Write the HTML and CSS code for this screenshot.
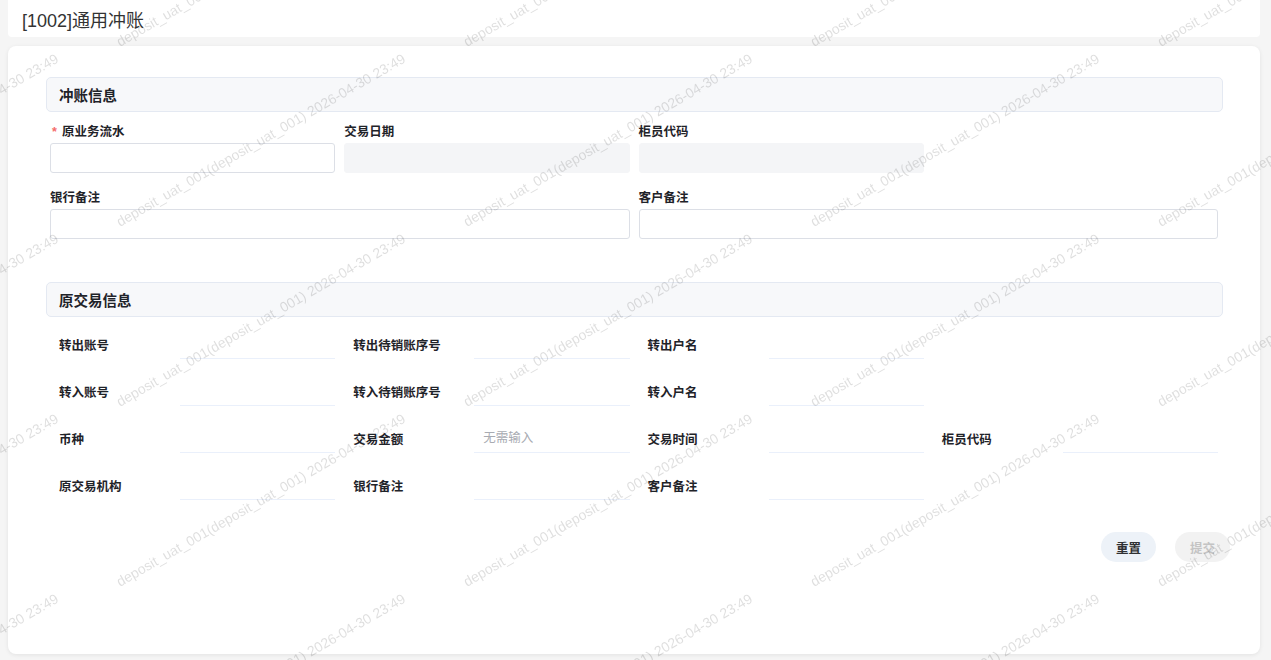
FILE: index.html
```html
<!DOCTYPE html>
<html lang="zh-CN">
<head>
    <meta charset="UTF-8">
    <meta name="viewport" content="width=device-width, initial-scale=1.0">
    <title>[1002]通用冲账</title>
    <link rel="stylesheet" href="styles.css">
</head>
<body>
    <div class="page">
        <div class="page-header">
            <h1 class="page-title">[1002]通用冲账</h1>
        </div>

        <div class="card">
            <div class="section">
                <div class="section-title">冲账信息</div>
                <div class="form-grid">
                    <div class="field">
                        <label class="field-label"><span class="required">*</span>原业务流水</label>
                        <input class="text-input" type="text">
                    </div>
                    <div class="field">
                        <label class="field-label">交易日期</label>
                        <input class="text-input" type="text" disabled>
                    </div>
                    <div class="field">
                        <label class="field-label">柜员代码</label>
                        <input class="text-input" type="text" disabled>
                    </div>
                    <div class="field span-2 col-1">
                        <label class="field-label">银行备注</label>
                        <input class="text-input" type="text">
                    </div>
                    <div class="field span-2">
                        <label class="field-label">客户备注</label>
                        <input class="text-input" type="text">
                    </div>
                </div>
            </div>

            <div class="section section-orig">
                <div class="section-title">原交易信息</div>
                <div class="info-grid">
                    <div class="info-item"><span class="info-label">转出账号</span><input class="line-input" type="text"></div>
                    <div class="info-item"><span class="info-label">转出待销账序号</span><input class="line-input" type="text"></div>
                    <div class="info-item"><span class="info-label">转出户名</span><input class="line-input" type="text"></div>

                    <div class="info-item col-1"><span class="info-label">转入账号</span><input class="line-input" type="text"></div>
                    <div class="info-item"><span class="info-label">转入待销账序号</span><input class="line-input" type="text"></div>
                    <div class="info-item"><span class="info-label">转入户名</span><input class="line-input" type="text"></div>

                    <div class="info-item col-1"><span class="info-label">币种</span><input class="line-input" type="text"></div>
                    <div class="info-item"><span class="info-label">交易金额</span><input class="line-input" type="text" placeholder="无需输入"></div>
                    <div class="info-item"><span class="info-label">交易时间</span><input class="line-input" type="text"></div>
                    <div class="info-item"><span class="info-label">柜员代码</span><input class="line-input" type="text"></div>

                    <div class="info-item col-1"><span class="info-label">原交易机构</span><input class="line-input" type="text"></div>
                    <div class="info-item"><span class="info-label">银行备注</span><input class="line-input" type="text"></div>
                    <div class="info-item"><span class="info-label">客户备注</span><input class="line-input" type="text"></div>
                </div>
            </div>

            <div class="actions">
                <button class="btn btn-reset">重置</button>
                <button class="btn btn-submit" disabled>提交</button>
            </div>
        </div>
    </div>

    <div class="watermark">
        <div class="watermark-grid">
            <span>deposit_uat_001(deposit_uat_001) 2026-04-30 23:49</span>
            <span>deposit_uat_001(deposit_uat_001) 2026-04-30 23:49</span>
            <span>deposit_uat_001(deposit_uat_001) 2026-04-30 23:49</span>
            <span>deposit_uat_001(deposit_uat_001) 2026-04-30 23:49</span>
            <span>deposit_uat_001(deposit_uat_001) 2026-04-30 23:49</span>
            <span>deposit_uat_001(deposit_uat_001) 2026-04-30 23:49</span>
            <span>deposit_uat_001(deposit_uat_001) 2026-04-30 23:49</span>
            <span>deposit_uat_001(deposit_uat_001) 2026-04-30 23:49</span>
            <span>deposit_uat_001(deposit_uat_001) 2026-04-30 23:49</span>
            <span>deposit_uat_001(deposit_uat_001) 2026-04-30 23:49</span>
            <span>deposit_uat_001(deposit_uat_001) 2026-04-30 23:49</span>
            <span>deposit_uat_001(deposit_uat_001) 2026-04-30 23:49</span>
            <span>deposit_uat_001(deposit_uat_001) 2026-04-30 23:49</span>
            <span>deposit_uat_001(deposit_uat_001) 2026-04-30 23:49</span>
            <span>deposit_uat_001(deposit_uat_001) 2026-04-30 23:49</span>
            <span>deposit_uat_001(deposit_uat_001) 2026-04-30 23:49</span>
            <span>deposit_uat_001(deposit_uat_001) 2026-04-30 23:49</span>
            <span>deposit_uat_001(deposit_uat_001) 2026-04-30 23:49</span>
            <span>deposit_uat_001(deposit_uat_001) 2026-04-30 23:49</span>
            <span>deposit_uat_001(deposit_uat_001) 2026-04-30 23:49</span>
            <span>deposit_uat_001(deposit_uat_001) 2026-04-30 23:49</span>
            <span>deposit_uat_001(deposit_uat_001) 2026-04-30 23:49</span>
            <span>deposit_uat_001(deposit_uat_001) 2026-04-30 23:49</span>
            <span>deposit_uat_001(deposit_uat_001) 2026-04-30 23:49</span>
            <span>deposit_uat_001(deposit_uat_001) 2026-04-30 23:49</span>
        </div>
    </div>
</body>
</html>
```

FILE: styles.css
```css
body {
    margin: 0;
    background-color: #f5f5f5;
    font-family: 'Liberation Sans', 'Noto Sans CJK SC', sans-serif;
    color: #303133;
    height: 660px;
    overflow: hidden;
}
.page {
    padding: 0 11px 0 8px;
}
.page-header {
    background-color: #fff;
    height: 37px;
    display: flex;
    align-items: center;
    padding-left: 14px;
    border-radius: 0 0 4px 4px;
}
.page-title {
    margin: 0;
    font-size: 18px;
    font-weight: normal;
    color: #333;
}
.card {
    margin-top: 9px;
    height: 608px;
    box-sizing: border-box;
    background-color: #fff;
    border-radius: 8px;
    box-shadow: 0 1px 4px rgba(0, 0, 0, 0.08);
    padding: 31px 30px 0 38px;
}
.section {
    margin-right: 7px;
}
.section-title {
    height: 35px;
    box-sizing: border-box;
    border: 1px solid #e4e9f2;
    background-color: #f7f8fa;
    border-radius: 5px;
    padding-left: 12px;
    display: flex;
    align-items: center;
    font-size: 14.5px;
    font-weight: bold;
    color: #1f2329;
}
.form-grid {
    display: grid;
    grid-template-columns: repeat(4, minmax(0, 1fr));
    column-gap: 9px;
    row-gap: 15px;
    padding: 10px 5px 0 4px;
}
.field {
    display: flex;
    flex-direction: column;
    min-width: 0;
}
.span-2 {
    grid-column: span 2;
}
.col-1 {
    grid-column-start: 1;
}
.span-2.col-1 {
    grid-column: 1 / span 2;
}
.field-label {
    height: 20px;
    line-height: 20px;
    font-size: 12.5px;
    font-weight: bold;
    color: #1f2329;
    margin-bottom: 1px;
}
.required {
    color: #f56c6c;
    margin: 0 5px 0 2px;
}
.text-input {
    width: 100%;
    height: 30px;
    box-sizing: border-box;
    border: 1px solid #dcdfe6;
    border-radius: 3px;
    padding: 0 10px;
    font-size: 13px;
    background-color: #fff;
    outline: none;
}
.text-input:disabled {
    background-color: #f4f5f7;
    border-color: #f4f5f7;
}
.section-orig {
    margin-top: 43px;
}
.info-grid {
    display: grid;
    grid-template-columns: repeat(4, minmax(0, 1fr));
    column-gap: 9px;
    row-gap: 17px;
    padding: 12px 5px 0 4px;
}
.info-item {
    display: flex;
    align-items: center;
    height: 30px;
    min-width: 0;
}
.info-label {
    width: 130px;
    flex-shrink: 0;
    box-sizing: border-box;
    padding-left: 9px;
    font-size: 12.5px;
    font-weight: bold;
    color: #1f2329;
}
.line-input {
    flex: 1;
    width: 0;
    min-width: 0;
    height: 30px;
    box-sizing: border-box;
    border: none;
    border-bottom: 1px solid #eaf0fb;
    padding: 0 10px 0 9px;
    font-size: 12.5px;
    font-family: inherit;
    background: transparent;
    outline: none;
}
.line-input::placeholder {
    color: #a8abb2;
}
.actions {
    display: flex;
    justify-content: flex-end;
    gap: 19px;
    margin-top: 32px;
}
.btn {
    width: 55px;
    height: 30px;
    border: none;
    border-radius: 15px;
    font-family: inherit;
    font-size: 12.5px;
    font-weight: bold;
    cursor: pointer;
}
.btn-reset {
    background-color: #edf2f8;
    color: #303133;
}
.btn-submit {
    background-color: #f2f2f2;
    color: #c4c4c4;
    cursor: not-allowed;
}
.watermark {
    position: fixed;
    inset: 0;
    overflow: hidden;
    pointer-events: none;
    z-index: 10;
}
.watermark-grid {
    display: grid;
    grid-template-columns: repeat(5, 347px);
    grid-auto-rows: 180px;
    margin-left: -227px;
    margin-top: 35px;
}
.watermark-grid span {
    display: block;
    width: max-content;
    font-family: 'Liberation Sans', sans-serif;
    font-size: 14px;
    line-height: 14px;
    color: rgba(0, 0, 0, 0.13);
    white-space: nowrap;
    transform-origin: 0 12px;
    transform: rotate(-30deg);
}
```
